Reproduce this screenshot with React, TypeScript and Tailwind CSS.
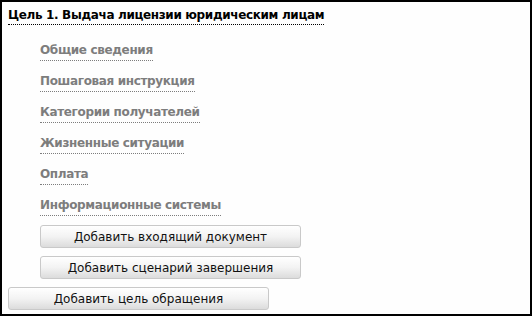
const links = [
  'Общие сведения',
  'Пошаговая инструкция',
  'Категории получателей',
  'Жизненные ситуации',
  'Оплата',
  'Информационные системы',
];

function Btn({ label, className = '' }: { label: string; className?: string }) {
  return (
    <button
      className={`w-[261px] h-[23px] rounded-[3px] border border-[#c9c9c9] bg-gradient-to-b from-[#ffffff] via-[#f3f3f3] to-[#dcdcdc] text-[12px] text-[#111] leading-none ${className}`}
    >
      {label}
    </button>
  );
}

export default function App() {
  return (
    <div className="w-[532px] h-[316px] border-2 border-black bg-[#fefefe] overflow-hidden font-['DejaVu_Sans',sans-serif]">
      <div className="flex items-start pl-[6px] pt-[6px]">
        <span className="text-[12px] font-bold text-black tracking-[-0.35px] leading-[14px] pb-[2px] border-b border-dotted border-black">
          Цель 1. Выдача лицензии юридическим лицам
        </span>
      </div>

      <div className="flex flex-col items-start pl-[38px] mt-[16px] gap-[11px]">
        {links.map((l) => (
          <span
            key={l}
            className="text-[12px] font-bold text-[#7d7d7d] tracking-[-0.35px] leading-[19px] border-b border-dotted border-[#7d7d7d]"
          >
            {l}
          </span>
        ))}
      </div>

      <div className="flex flex-col mt-[9px] gap-[8px]">
        <Btn label="Добавить входящий документ" className="ml-[38px]" />
        <Btn label="Добавить сценарий завершения" className="ml-[38px]" />
        <Btn label="Добавить цель обращения" className="ml-[6px]" />
      </div>
    </div>
  );
}
